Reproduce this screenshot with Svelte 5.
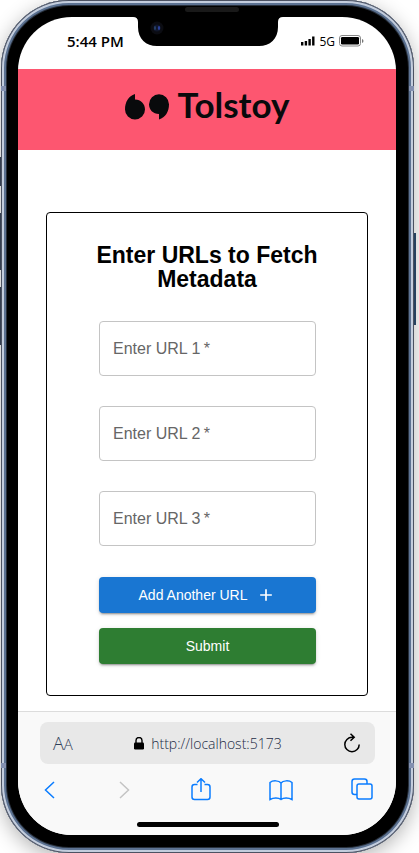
<script>
  let urls = $state(['', '', '']);

  function addUrl() {
    urls.push('');
  }

  function submit(event) {
    event.preventDefault();
  }
</script>

<div class="phone">
  <span class="band band-left upper"></span>
  <span class="band band-right upper"></span>
  <span class="band band-left lower"></span>
  <span class="band band-right lower"></span>
  <span class="side silent"></span>
  <span class="side volume-up"></span>
  <span class="side volume-down"></span>
  <span class="side power"></span>
  <span class="speaker"></span>
  <svg class="notch" width="150" height="30" viewBox="0 0 150 30" aria-hidden="true">
    <path d="M0 0H150Q145 0 145 5V10C145 22 137 29 126 29H24C13 29 5 22 5 10V5Q5 0 0 0Z" fill="#000" />
    <circle cx="24" cy="11" r="6.5" fill="#0b0c12" />
    <circle cx="24" cy="11" r="3.5" fill="#10172c" />
    <ellipse cx="22" cy="11" rx="1" ry="2" fill="#26406b" />
    <ellipse cx="26" cy="11" rx="1.2" ry="2" fill="#2a3f9a" />
  </svg>

  <div class="screen">
    <div class="status">
      <span class="time">5:44 PM</span>
      <div class="signals">
        <svg width="14" height="10" viewBox="0 0 14 10" aria-hidden="true">
          <path d="M0 6h2.4v3.500H0zM3.700 5h2.400v4.500H3.700zM7.400 3h2.400v6.500H7.400zM11.100 0.500h2.400v9H11.100z" />
        </svg>
        <span class="network">5G</span>
        <svg width="25" height="12" viewBox="0 0 25 12" aria-hidden="true">
          <rect x="0.500" y="0.500" width="21" height="10.500" rx="2.500" fill="none" stroke="#888" />
          <rect x="2" y="2" width="18" height="7.500" rx="1.300" />
          <path d="M23 4v4q1.500-.5 1.500-2T23 4Z" fill="#777" />
        </svg>
      </div>
    </div>

    <header>
      <svg width="45" height="26" viewBox="0 0 45 26" aria-hidden="true" fill="#090a0c">
        <path d="M10 0V5.500C16 5.500 20 10 20 15.500A10 10 0 0 1 0 15.500C0 8 3.500 2 10 0Z" />
        <path d="M34 25.500V20C28 20 24 15.500 24 10.200A10 10 0 0 1 44 10.200C44 17.500 40.500 23.500 34 25.500Z" />
      </svg>
      <span class="brand">Tolstoy</span>
    </header>

    <main>
      <form class="card" onsubmit={submit}>
        <h1>Enter URLs to Fetch Metadata</h1>
        <div class="fields">
          {#each urls as url, i}
            <div class="field">
              <input id="url-{i}" type="text" required placeholder=" " bind:value={urls[i]} />
              <label for="url-{i}">Enter URL {i + 1}&thinsp;*</label>
            </div>
          {/each}
        </div>
        <div class="actions">
          <button type="button" class="add" onclick={addUrl}>
            Add Another URL
            <svg width="20" height="20" viewBox="0 0 24 24" aria-hidden="true">
              <path d="M19 13h-6v6h-2v-6H5v-2h6V5h2v6h6z" fill="#fff" />
            </svg>
          </button>
          <button type="submit" class="submit">Submit</button>
        </div>
      </form>
    </main>

    <footer>
      <div class="address">
        <button type="button" class="text-size" aria-label="Text size">A<small>A</small></button>
        <span class="location">
          <svg width="10" height="13" viewBox="0 0 10 13" aria-hidden="true">
            <path d="M2 6V3.500a3 3 0 0 1 6 0V6" fill="none" stroke="#000" stroke-width="1.400" />
            <rect x="0" y="5.500" width="10" height="7" rx="1.200" />
          </svg>
          http://localhost:5173
        </span>
        <button type="button" aria-label="Reload">
          <svg width="18" height="21" viewBox="0 0 18 21" fill="none" stroke="#000" stroke-width="1.500" aria-hidden="true">
            <path d="M10.500 4.300H9A7.200 7.200 0 1 0 16.200 11.500M7.500 0.800L11.200 4.300L7.500 7.800" />
          </svg>
        </button>
      </div>
      <nav>
        <button type="button" aria-label="Back">
          <svg width="16" height="24" viewBox="3 0 16 24" class="line"><path d="M15 4L6.500 12L15 20" /></svg>
        </button>
        <button type="button" aria-label="Forward">
          <svg width="16" height="24" viewBox="3 0 16 24" class="line off"><path d="M7 4L15.500 12L7 20" /></svg>
        </button>
        <button type="button" aria-label="Share">
          <svg width="20" height="24" viewBox="1 0 20 24" class="line">
            <path d="M7.500 6.500H4.500Q2 6.500 2 9V19Q2 21.500 4.500 21.500H17.500Q20 21.500 20 19V9Q20 6.500 17.500 6.500H14.500M11 14V0.800M7 4.500L11 0.700L15 4.500" />
          </svg>
        </button>
        <button type="button" aria-label="Bookmarks">
          <svg width="24" height="24" viewBox="0 0 24 24" class="line">
            <path d="M12 5C10 2.500 4 2 1 4.500V21.500C4.500 19.500 9.500 19.500 12 21.500C14.500 19.500 19.500 19.500 23 21.500V4.500C20 2 14 2.500 12 5ZM12 5V21.500" />
          </svg>
        </button>
        <button type="button" aria-label="Tabs">
          <svg width="22" height="24" viewBox="0 0 22 24" class="line">
            <rect x="6" y="6" width="15" height="15" rx="2" />
            <path d="M6 16.500H3.500Q1 16.500 1 14V3.500Q1 1 3.500 1H13.500Q16 1 16 3.500V6" />
          </svg>
        </button>
      </nav>
      <div class="home"></div>
    </footer>
  </div>
</div>

<style>
  :global(body) {
    background: #fff;
    overflow-x: hidden;
  }

  .phone {
    position: relative;
    box-sizing: border-box;
    min-height: 100vh;
    margin: 0 5px 0 1px;
    padding: 17px 18px 18px 17px;
    border-radius: 68px;
    background: #000;
    box-shadow:
      inset 0 0 0 1px #4c5262,
      inset 0 0 0 3px #c3cddd,
      inset 0 0 0 5px #5c7292,
      inset 0 0 0 6px #28303c,
      0 5px 20px rgba(0, 0, 0, 0.3);
    display: flex;
    font-family: "Liberation Sans", Arial, sans-serif;
  }

  .band {
    position: absolute;
    width: 5px;
    height: 5px;
    background: #8390b0;
  }
  .band-left { left: 0; }
  .band-right { right: 0; }
  .upper { top: 86px; }
  .lower { bottom: 85px; }

  .side {
    position: absolute;
    left: -1px;
    width: 1px;
    background: #343e50;
  }
  .silent { top: 157px; height: 29px; }
  .volume-up { top: 213px; height: 57px; }
  .volume-down { top: 287px; height: 58px; }
  .power {
    left: auto;
    right: -2px;
    top: 233px;
    width: 2px;
    height: 92px;
    background: #26415f;
  }

  .speaker {
    position: absolute;
    top: 7px;
    left: 50%;
    width: 54px;
    height: 5px;
    margin-left: -23px;
    border-radius: 3px;
    background: #191919;
  }

  .notch {
    position: absolute;
    top: 17px;
    left: 50%;
    margin-left: -75px;
  }

  .screen {
    flex: 1;
    min-width: 0;
    display: flex;
    flex-direction: column;
    overflow: hidden;
    border-radius: 54px;
    background: #fff;
  }

  .status {
    height: 52px;
    display: flex;
    align-items: center;
    justify-content: space-between;
    padding: 0 32px 4px 49px;
    box-sizing: border-box;
    font-family: "Open Sans", "Noto Sans", sans-serif;
  }
  .time { font-size: 15px; font-weight: 600; }
  .signals {
    display: flex;
    align-items: center;
    gap: 4px;
  }
  .network { font-size: 12px; }

  header {
    box-sizing: border-box;
    height: 81px;
    padding-bottom: 6px;
    display: flex;
    align-items: center;
    justify-content: center;
    gap: 8px;
    background: #fd5670;
  }
  .brand {
    padding-bottom: 5px;
    font-family: Lato, sans-serif;
    font-size: 35px;
    font-weight: 700;
    line-height: 40px;
    color: #090a0c;
  }

  main {
    flex: 1;
    padding: 62px 28px 15px;
  }

  .card {
    box-sizing: border-box;
    padding: 30px 30px 31px;
    border: 1px solid #000;
    border-radius: 4px;
  }
  h1 {
    margin: 0 0 30px;
    font-size: 23px;
    line-height: 24px;
    text-align: center;
  }
  .fields,
  .actions {
    display: flex;
    flex-direction: column;
    gap: 30px;
    padding: 0 21px 0 22px;
  }
  .fields { margin-bottom: 31px; }
  .actions { gap: 15px; }

  .field { position: relative; }
  input {
    display: block;
    box-sizing: border-box;
    width: 100%;
    height: 55px;
    padding: 0 13px;
    border: 1px solid #c4c4c4;
    border-radius: 4px;
    background: transparent;
    font: 16px "Liberation Sans", Arial, sans-serif;
    outline: none;
  }
  input:focus { border-color: #1976d2; }
  label {
    position: absolute;
    top: 16px;
    left: 14px;
    font-size: 16px;
    line-height: 23px;
    color: #666;
    pointer-events: none;
  }
  input:focus + label,
  input:not(:placeholder-shown) + label {
    top: -9px;
    left: 10px;
    padding: 0 4px;
    background: #fff;
    font-size: 12px;
    line-height: 18px;
  }

  button {
    display: flex;
    align-items: center;
    justify-content: center;
    padding: 0;
    border: 0;
    background: none;
    color: inherit;
    font: inherit;
    cursor: pointer;
  }
  .add,
  .submit {
    height: 36px;
    gap: 9px;
    border-radius: 4px;
    color: #fff;
    font-size: 14px;
    box-shadow:
      0 3px 1px -2px rgba(0, 0, 0, 0.2),
      0 2px 2px rgba(0, 0, 0, 0.14),
      0 1px 5px rgba(0, 0, 0, 0.12);
  }
  .add { background: #1976d2; }
  .submit { background: #2e7d32; }

  footer {
    padding: 10px 21px 8px 22px;
    border-top: 1px solid #dcdcdc;
    background: #f9f9f9;
  }
  .address {
    height: 42px;
    display: flex;
    align-items: center;
    justify-content: space-between;
    padding: 0 14px 0 13px;
    border-radius: 8px;
    background: #e8e8e8;
    color: #2f3e58;
    font-family: "Open Sans", "Noto Sans", sans-serif;
  }
  .text-size {
    align-items: baseline;
    font-size: 18px;
  }
  .text-size small { font-size: 15px; }
  .text-size,
  .location { font-weight: 300; }
  .location {
    display: flex;
    align-items: center;
    gap: 7px;
    color: #1c2b45;
    font-size: 14px;
  }
  nav {
    display: flex;
    justify-content: space-between;
    padding: 14px 2px 0;
  }
  .line {
    fill: none;
    stroke: #0a7cff;
    stroke-width: 1.5;
  }
  .off { stroke: #c4c4c4; }
  .home {
    width: 142px;
    height: 5px;
    margin: 20px auto 0;
    border-radius: 3px;
    background: #000;
  }
</style>
